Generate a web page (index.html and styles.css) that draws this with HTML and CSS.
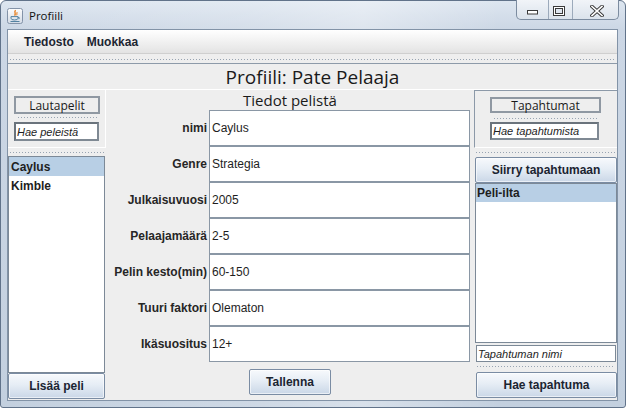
FILE: index.html
```html
<!DOCTYPE html>
<html>
<head>
<meta charset="utf-8">
<link rel="stylesheet" href="styles.css">
</head>
<body>
<div class="window">
  <div class="titlebar">
    <svg class="app-icon" viewBox="0 0 16 16" width="16" height="16">
      <defs>
        <linearGradient id="ig" x1="0" y1="0" x2="0" y2="1">
          <stop offset="0" stop-color="#fdfdfd"/>
          <stop offset="1" stop-color="#d3dbe6"/>
        </linearGradient>
      </defs>
      <rect x="0.5" y="0.5" width="15" height="15" rx="2" fill="url(#ig)" stroke="#8393a8"/>
      <path d="M8.6 2.2 C6.4 4 9.6 5.2 7.6 7.6" stroke="#e76f00" stroke-width="1.2" fill="none"/>
      <path d="M10.2 4.2 C9.2 5.2 10.6 6 9.4 7.3" stroke="#e76f00" stroke-width="1" fill="none"/>
      <path d="M4 8.6 h7 v1.6 a3.5 1.8 0 0 1 -7 0 z" fill="none" stroke="#5382a1" stroke-width="1"/>
      <path d="M11 9.2 q2.2 0 0.8 2" stroke="#5382a1" fill="none"/>
      <path d="M3.5 13.5 h9" stroke="#5382a1"/>
    </svg>
    <span class="title">Profiili</span>
    <div class="controls">
      <div class="ctl ctl-min">
        <svg width="11" height="5" viewBox="0 0 11 5"><rect x="0.5" y="0.5" width="10" height="3.5" fill="#fff" stroke="#3b3b3b"/></svg>
      </div>
      <div class="ctl ctl-max">
        <svg width="12" height="10" viewBox="0 0 12 10"><rect x="0.5" y="0.5" width="11" height="9" fill="#fff" stroke="#3b3b3b"/><rect x="2.5" y="2.5" width="7" height="5" fill="#dfe6ef" stroke="#3b3b3b"/></svg>
      </div>
      <div class="ctl ctl-close">
        <svg width="14" height="12" viewBox="0 0 14 12"><path d="M2 1.5 L12 10.5 M12 1.5 L2 10.5" stroke="#3b3b3b" stroke-width="3.6" stroke-linecap="square"/><path d="M2 1.5 L12 10.5 M12 1.5 L2 10.5" stroke="#ffffff" stroke-width="1.6" stroke-linecap="square"/></svg>
      </div>
    </div>
  </div>
  <div class="client">
    <div class="menubar">
      <span class="menu">Tiedosto</span>
      <span class="menu">Muokkaa</span>
    </div>
    <div class="toolbar"><div class="dots"></div></div>
    <div class="heading">Profiili: Pate Pelaaja</div>
    <div class="columns">
      <div class="side side-left">
        <div class="panel panel-left">
          <div class="caption caption-left">Lautapelit</div>
          <div class="dots dots-left"></div>
          <div class="search search-left">Hae peleistä</div>
        </div>
        <div class="divider"><div class="dots"></div></div>
        <div class="list list-left">
          <div class="item selected">Caylus</div>
          <div class="item">Kimble</div>
        </div>
        <div class="button btn-add">Lisää peli</div>
      </div>
      <div class="center">
        <div class="subheading">Tiedot pelistä</div>
        <div class="form">
          <div class="label">nimi</div><div class="field">Caylus</div>
          <div class="label">Genre</div><div class="field">Strategia</div>
          <div class="label">Julkaisuvuosi</div><div class="field">2005</div>
          <div class="label">Pelaajamäärä</div><div class="field">2-5</div>
          <div class="label">Pelin kesto(min)</div><div class="field">60-150</div>
          <div class="label">Tuuri faktori</div><div class="field">Olematon</div>
          <div class="label">Ikäsuositus</div><div class="field">12+</div>
        </div>
        <div class="button btn-save">Tallenna</div>
      </div>
      <div class="side side-right">
        <div class="panel panel-right">
          <div class="caption caption-right">Tapahtumat</div>
          <div class="dots dots-right"></div>
          <div class="search search-right">Hae tapahtumista</div>
        </div>
        <div class="divider divider-right"><div class="dots"></div></div>
        <div class="button btn-goto">Siirry tapahtumaan</div>
        <div class="list list-right">
          <div class="item item-right selected">Peli-ilta</div>
        </div>
        <div class="event-name">Tapahtuman nimi</div>
        <div class="dots dots-event"></div>
        <div class="button btn-find">Hae tapahtuma</div>
      </div>
    </div>
  </div>
</div>
</body>
</html>
```
FILE: styles.css
```css
* { box-sizing: border-box; }
html, body { margin: 0; padding: 0; }
body {
  width: 626px;
  height: 408px;
  overflow: hidden;
  font-family: "Liberation Sans", Arial, sans-serif;
  font-size: 12px;
  color: #222;
  background: #ffffff;
}

.window {
  width: 626px;
  height: 408px;
  border: 1px solid #61738a;
  border-radius: 6px 6px 3px 3px;
  background:
    linear-gradient(90deg, rgba(255,255,255,0) 0%, rgba(255,255,255,0.18) 40%, rgba(255,255,255,0.35) 58%, rgba(255,255,255,0) 80%),
    linear-gradient(180deg, #dde6f0 0px, #ccd7e5 28px, #c3d0df 100%);
  padding: 0 7px 6px 6px;
  display: flex;
  flex-direction: column;
}

.titlebar {
  height: 28px;
  flex: none;
  display: flex;
  align-items: center;
}
.app-icon { flex: none; margin-top: 1px; }
.title {
  margin-left: 6px;
  font-family: "Open Sans", sans-serif;
  font-size: 11.5px;
  color: #111;
}
.controls {
  margin-left: auto;
  margin-top: -1px;
  margin-right: -1px;
  align-self: flex-start;
  height: 20px;
  display: flex;
  border: 1px solid #7c8ca0;
  border-top: none;
  border-radius: 0 0 5px 5px;
  background: linear-gradient(#f1f4f8, #dbe3ec);
  overflow: hidden;
}
.ctl {
  display: flex;
  align-items: center;
  justify-content: center;
}
.ctl-min { width: 32px; border-right: 1px solid #9caabb; padding-top: 6px; }
.ctl-max { width: 24px; border-right: 1px solid #9caabb; padding-top: 3px; padding-right: 3px; }
.ctl-close { width: 45px; padding-top: 2px; padding-left: 2px; }

.client {
  flex: 1;
  min-height: 0;
  border: 1px solid #8293a7;
  background: #eeeeee;
  display: flex;
  flex-direction: column;
}

.menubar {
  height: 24px;
  flex: none;
  background: linear-gradient(#ffffff, #e3e3e3);
  border-bottom: 1px solid #cfcfcf;
  display: flex;
  align-items: center;
  padding-left: 16px;
  gap: 13px;
  font-weight: bold;
  color: #1d2531;
}

.dots {
  height: 1px;
  background: repeating-linear-gradient(90deg, #98a4b2 0 1px, transparent 1px 3px);
}
.toolbar {
  height: 10px;
  flex: none;
  padding: 5px 2px 0 2px;
  border-bottom: 1px solid #8d9aa9;
}

.heading {
  height: 25px;
  flex: none;
  display: flex;
  align-items: center;
  justify-content: center;
  font-family: "Open Sans", sans-serif;
  font-size: 19px;
  color: #1a1a1a;
}

.columns {
  flex: 1;
  min-height: 0;
  display: flex;
  border-top: 1px solid #ffffff;
}

.side { flex: none; display: flex; flex-direction: column; }
.side-left { width: 98px; }
.side-right { width: 143px; }

.panel { height: 58px; flex: none; }
.panel-left {
  border-right: 1px solid #ffffff;
  border-bottom: 1px solid #ffffff;
  padding: 6px 0 0 6px;
}
.panel-right {
  border-top: 1px solid #8c99a8;
  border-left: 1px solid #8c99a8;
  border-bottom: 1px solid #ffffff;
  padding: 6px 0 0 15px;
}

.caption {
  border: 2px solid #8f98a2;
  display: flex;
  align-items: center;
  justify-content: center;
  font-family: "Open Sans", sans-serif;
  font-size: 12px;
  color: #1a1a1a;
}
.caption-left { width: 86px; height: 18px; }
.caption-right { width: 111px; height: 16px; }

.dots-left { width: 79px; margin: 3px 0 4px 4px; }
.dots-right { width: 104px; margin: 5px 0 3px 4px; }

.search {
  border: 2px solid #7f8993;
  border-top-color: #6a737c;
  border-left-color: #6a737c;
  background: #ffffff;
  display: flex;
  align-items: center;
  padding-left: 1px;
  font-style: italic;
  font-size: 11px;
  color: #1e1e1e;
}
.search-left { width: 85px; height: 19px; }
.search-right { width: 109px; height: 18px; }

.divider { height: 8px; flex: none; padding: 4px 1px 0 2px; }
.divider-right { height: 9px; }

.list {
  flex: none;
  background: #ffffff;
  border: 1px solid #7c8997;
}
.list-left { width: 97px; height: 217px; }
.list-right { width: 142px; height: 160px; margin-left: 1px; }

.item {
  height: 19px;
  display: flex;
  align-items: center;
  padding-left: 2px;
  font-weight: bold;
  color: #1e1e1e;
}
.item-right { height: 18px; padding-left: 1px; }
.item.selected { background: #b8cfe5; }

.button {
  flex: none;
  display: flex;
  align-items: center;
  justify-content: center;
  font-weight: bold;
  color: #1b2431;
  border: 1px solid #7a8ca3;
  border-radius: 2px;
  background: linear-gradient(#f7f9fc 0%, #e6edf5 45%, #cad7e7 100%);
  box-shadow: inset 0 0 0 1px rgba(255,255,255,0.6);
}
.btn-add { width: 97px; height: 26px; }
.btn-save { width: 82px; height: 26px; margin-top: 7px; align-self: center; }
.btn-goto { width: 142px; height: 26px; margin-left: 1px; }
.btn-find { width: 141px; height: 26px; margin-left: 2px; }

.center {
  width: 368px;
  flex: none;
  display: flex;
  flex-direction: column;
}
.subheading {
  height: 20px;
  display: flex;
  align-items: center;
  justify-content: center;
  font-family: "Open Sans", sans-serif;
  font-size: 15px;
  color: #1a1a1a;
}
.form {
  display: grid;
  grid-template-columns: 101px 261px;
  grid-auto-rows: 36px;
  column-gap: 2px;
}
.label {
  display: flex;
  align-items: center;
  justify-content: flex-end;
  font-weight: bold;
  color: #262626;
  white-space: nowrap;
}
.field {
  border: 1px solid #8a97a5;
  background: #ffffff;
  display: flex;
  align-items: center;
  padding-left: 2px;
  color: #1e1e1e;
}

.event-name {
  width: 140px;
  height: 17px;
  margin: 2px 0 0 2px;
  border: 1px solid #7c8997;
  background: #ffffff;
  display: flex;
  align-items: center;
  padding-left: 1px;
  font-style: italic;
  font-size: 11px;
  color: #1e1e1e;
}
.dots-event { width: 138px; margin: 4px 0 5px 3px; }
```
